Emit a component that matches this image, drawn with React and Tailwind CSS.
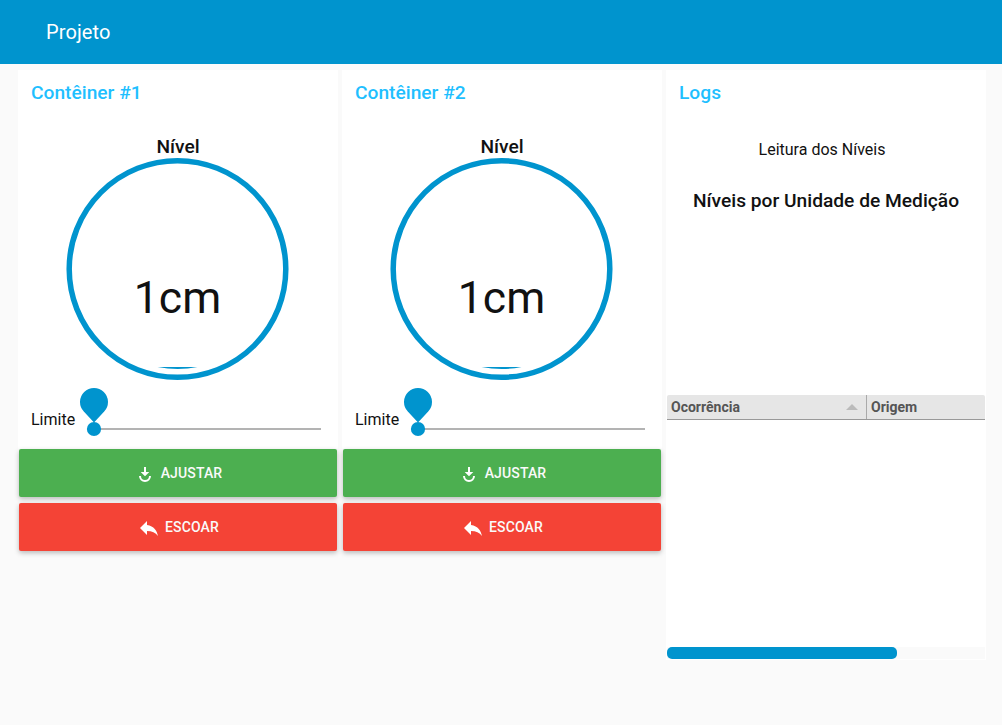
import React from "react";

function Gauge() {
  return (
    <svg className="block shrink-0" width="320" height="224" viewBox="0 0 320 224">
      <circle cx="159.5" cy="112" r="108.3" fill="none" stroke="#0094ce" strokeWidth="5.5" />
      <path d="M139.500 210 L179.500 210 Q160 214 139.500 210Z" fill="#0094ce" />
      <text x="159.5" y="156.4" textAnchor="middle" fontSize="44.5" fill="#111111" className="font-[Roboto,sans-serif]">
        1cm
      </text>
    </svg>
  );
}

function Slider() {
  return (
    <div className="mt-[5px] flex h-[63px] shrink-0 pl-[13px]">
      <span className="w-[48px] pt-[24px] text-[16px] leading-[19px]">Limite</span>
      <svg width="246" height="60" viewBox="0 0 246 60">
        <rect x="15" y="42" width="227" height="2" fill="#b3b3b3" />
        <path d="M15 36.500 L4.800 25.600 A14 14 0 1 1 25.200 25.600 Z" fill="#0094ce" />
        <circle cx="15" cy="43" r="7.100" fill="#0094ce" />
      </svg>
    </div>
  );
}

function DownIcon() {
  return (
    <svg className="mr-2 mt-[2px]" width="16" height="18" viewBox="0 0 16 18">
      <path d="M7 2h2v5h3.300l-4.300 4.300-4.300-4.300h3.300z" fill="#fff" />
      <path d="M3 11a5 5 0 0 0 10 0" fill="none" stroke="#fff" strokeWidth="2" />
    </svg>
  );
}

function ReplyIcon() {
  return (
    <svg className="ml-[-3px] mr-1 mt-[2px]" width="24" height="24" viewBox="0 0 24 24">
      <path d="M10 9V5l-7 7 7 7v-4.100c5 0 8.500 1.600 11 5.100-1-5-4-10-11-11z" fill="#fff" />
    </svg>
  );
}

function Button({ className, children }) {
  return (
    <button
      className={
        "mx-px flex h-12 items-center justify-center rounded-[2px] text-[14px] font-medium uppercase tracking-[0.14px] text-[#fafafa] shadow-[0_2px_5px_0_rgba(0,0,0,0.26)] " +
        className
      }
    >
      {children}
    </button>
  );
}

function Container({ title }) {
  return (
    <section className="flex w-80 flex-col bg-white">
      <h2 className="h-[66px] pl-[13px] pt-[11px] text-[19.200px] font-medium leading-6 text-[#1fbfff]">{title}</h2>
      <div className="h-[21px] text-center text-[19.200px] font-medium leading-[22px]">Nível</div>
      <Gauge />
      <Slider />
      <div className="flex flex-col gap-[6px] bg-[#fafafa]">
        <Button className="bg-[#4caf50] pl-[3px]">
          <DownIcon />
          Ajustar
        </Button>
        <Button className="bg-[#f44336] pl-[3px]">
          <ReplyIcon />
          Escoar
        </Button>
      </div>
    </section>
  );
}

function Logs() {
  return (
    <section className="flex h-[590px] w-80 flex-col bg-white px-px">
      <h2 className="h-[69px] pl-3 pt-[11px] text-[19.200px] font-medium leading-6 text-[#1fbfff]">Logs</h2>
      <div className="h-[50px] pr-2 pt-px text-center text-[16px] leading-5">Leitura dos Níveis</div>
      <div className="h-[206px] text-center text-[19.200px] font-medium leading-6">Níveis por Unidade de Medição</div>
      <div className="flex h-[25px] shrink-0 rounded-t-[2px] border-b border-[#999] bg-[#e6e6e6] text-[14px] font-bold leading-6 text-[#555]">
        <div className="flex w-[200px] items-center justify-between border-r border-[#aaa] pl-1 pr-2">
          Ocorrência
          <span className="border-x-[6px] border-b-[6px] border-x-transparent border-b-[#bbb]" />
        </div>
        <div className="pl-1">Origem</div>
      </div>
      <div className="mt-[227px] h-3 shrink-0 bg-[#fafafa]">
        <div className="h-3 w-[230.300px] rounded-[5px] bg-[#0094ce]" />
      </div>
    </section>
  );
}

export default function App() {
  return (
    <div className="h-[725px] w-[1002px] overflow-hidden bg-[#fafafa] font-[Roboto,sans-serif] text-[#111111]">
      <header className="flex h-16 items-center bg-[#0094ce] pl-[46px] text-[20px] tracking-[0.1px] text-white">Projeto</header>
      <main className="flex items-start gap-1 pl-[18px] pt-[6px]">
        <Container title="Contêiner #1" />
        <Container title="Contêiner #2" />
        <Logs />
      </main>
    </div>
  );
}
